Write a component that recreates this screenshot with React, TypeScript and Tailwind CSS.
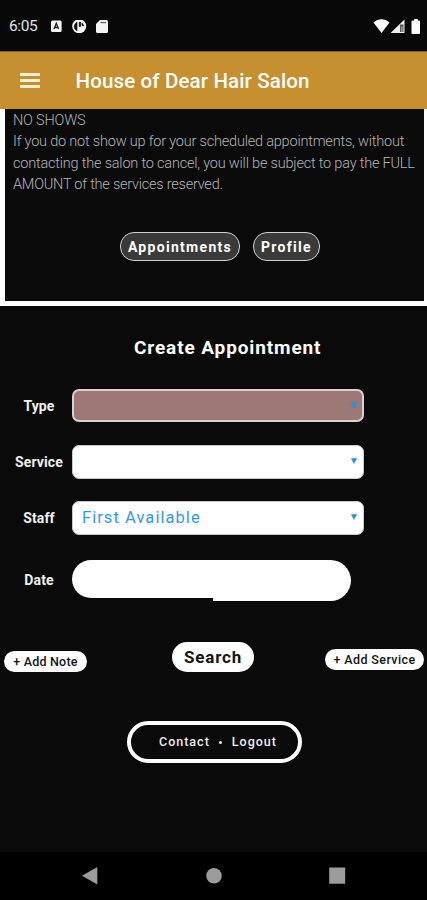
import React from "react";

function StatusBar() {
  return (
    <div className="flex h-[51px] shrink-0 items-start bg-[#080808] pl-[9px] pt-[17px] text-white">
      <span className="w-[42px] text-[15.5px] leading-[19px] tracking-[-0.4px] text-[#e4e4e4]">6:05</span>
      <svg className="mt-[3px] h-[13px] w-[60px]" viewBox="0 0 60 13" fill="none">
        <rect x="0" y="0.5" width="10.6" height="11.5" rx="1.5" fill="#f4f4f4" />
        <path d="M3 9 5.300 3.300 7.600 9M4 7.500h2.600" stroke="#222" strokeWidth="1.400" />
        <circle cx="28.200" cy="6.300" r="7" fill="#f4f4f4" />
        <path d="M26 2.200v8.600a4.700 4.700 0 0 1 0-8.600z" fill="#111" stroke="#111" strokeWidth=".6" />
        <path d="M28.300 2.200h1.200v4.200h-1.200zM31 3.200l1.800 2.400H31z" fill="#111" stroke="#111" strokeWidth=".8" />
        <path d="M49 0h6.500a1.500 1.500 0 0 1 1.500 1.500v10a1.500 1.500 0 0 1-1.500 1.500h-9A1.500 1.500 0 0 1 45 11.500V4z" fill="#f4f4f4" />
        <path d="M49.500 2.600h5.500" stroke="#666" strokeWidth="1.300" />
      </svg>
      <svg className="ml-auto mr-[5px] mt-px h-[17px] w-[49px]" viewBox="0 0 49 17">
        <path d="M.5 4.500C5 0 12 0 16.500 4.500L8.500 15z" fill="#fff" />
        <path d="M31.500 1.500V15H17.500z" fill="#eee" />
        <path d="M27 6.500h3.500V14H27z" fill="#555" />
        <path d="M28.200 8.500h1.300V14h-1.300z" fill="#aaa" />
        <path d="M39.500 2.500h1.700V1h3.600v1.500h1.200q1 0 1 1V15q0 1-1 1h-6.500q-1 0-1-1V3.500q0-1 1-1z" fill="#fff" />
      </svg>
    </div>
  );
}

function Header() {
  return (
    <header className="flex h-[58px] shrink-0 items-center border-t border-[#805d22] bg-[#c68f30] pl-5 text-white">
      <div className="flex w-5 flex-col gap-[3px]">
        <i className="h-[3px] bg-[#fff0d0]" />
        <i className="h-[3px] bg-[#fff0d0]" />
        <i className="h-[3px] bg-[#fff0d0]" />
      </div>
      <h1 className="ml-[35.5px] mt-px whitespace-nowrap text-[20.5px] font-medium tracking-[0.14px]">House of Dear Hair Salon</h1>
    </header>
  );
}

function Select({ type, children }: { type?: boolean; children?: React.ReactNode }) {
  return (
    <div
      className={
        "flex w-[292px] items-center justify-between rounded-[7px] pl-[9px] pr-[6px] text-[#2f9be6] " +
        (type ? "h-[33px] border-2 border-[#dccfcd] bg-[#9e7876]" : "h-[34px] border border-[#c9c9c9] bg-white")
      }
    >
      <span className="whitespace-nowrap pt-px text-[16.5px] tracking-[1.05px]">{children}</span>
      <svg className={type ? "-mr-px h-[6px] w-[6px] -translate-y-px" : "h-[6px] w-[6px] -translate-y-px"} viewBox="0 0 6 6">
        <path d={type ? "M0 .3h6L4.500 6h-3z" : "M0 .3h6L3 6z"} fill="#2492df" />
      </svg>
    </div>
  );
}

function Label({ children }: { children: React.ReactNode }) {
  return (
    <span className="w-[72px] whitespace-nowrap pl-[6px] pt-px text-center text-[14px] font-bold tracking-[0.1px] text-[#f0f0f0]">
      {children}
    </span>
  );
}

export default function App() {
  return (
    <div className="flex h-[900px] w-[427px] flex-col overflow-hidden bg-[#0a0a0a] font-['Roboto','Liberation_Sans',sans-serif]">
      <StatusBar />
      <Header />
      <section className="h-[197px] shrink-0 border-b-[5px] border-l-[5px] border-r-[3px] border-white pl-2">
        <div className="whitespace-nowrap pt-[0.5px] text-[14.5px] font-light leading-[21.5px] text-[#b5b5b5]">
          <p className="tracking-[-0.2px]">NO SHOWS</p>
          <p className="tracking-[-0.2px]">If you do not show up for your scheduled appointments, without</p>
          <p className="tracking-[-0.2px]">contacting the salon to cancel, you will be subject to pay the FULL</p>
          <p className="tracking-[-0.23px]">AMOUNT of the services reserved.</p>
        </div>
        <div className="ml-[107px] mt-[36.5px] flex gap-[13px] font-bold tracking-[1.3px] text-white">
          <button className="flex h-[29px] w-[120px] items-center justify-center whitespace-nowrap rounded-[14px] border-[1.5px] border-[#d0d0d0] bg-[#3a3a3a] pt-px text-[14px]">Appointments</button>
          <button className="flex h-[29px] w-[67px] items-center justify-center rounded-[14px] border-[1.5px] border-[#d0d0d0] bg-[#3a3a3a] pt-px text-[14px]">Profile</button>
        </div>
      </section>
      <main className="flex flex-1 flex-col">
        <h2 className="ml-[134px] mt-[30px] whitespace-nowrap text-[19px] font-bold leading-6 tracking-[0.88px] text-white">Create Appointment</h2>
        <div className="mt-[29px] flex h-[33px] items-center"><Label>Type</Label><Select type /></div>
        <div className="mt-[23px] flex h-[34px] items-center"><Label>Service</Label><Select /></div>
        <div className="mt-[22px] flex h-[34px] items-center"><Label>Staff</Label><Select>First Available</Select></div>
        <div className="mt-[25px] flex h-[41px] items-start">
          <div className="flex h-[39px] items-center"><Label>Date</Label></div>
          <div className="h-[38px] w-[141px] rounded-l-full bg-white" />
          <div className="h-[41px] w-[138px] rounded-r-full bg-white" />
        </div>
        <div className="mt-[41px] flex h-[30px] items-start pl-1 text-[#151515]">
          <button className="mt-[9px] flex h-[21px] w-[83px] items-center justify-center whitespace-nowrap rounded-full bg-white pt-[1.5px] text-[12.5px] font-medium tracking-[0.2px]">+ Add Note</button>
          <button className="ml-[85px] flex h-[30px] w-[82px] items-center justify-center rounded-full bg-white pt-[1.5px] text-[17px] font-bold tracking-[0.8px]">Search</button>
          <button className="ml-[71px] mt-[7px] flex h-[21px] w-[99px] items-center justify-center whitespace-nowrap rounded-full bg-white pt-[1.5px] text-[12.5px] font-medium tracking-[0.4px]">+ Add Service</button>
        </div>
        <div className="ml-[127px] mt-[49px] flex h-[42px] w-[175px] items-center whitespace-nowrap rounded-full border-4 border-white pl-7 text-[12.5px] font-medium tracking-[1px] text-[#ededed]">
          <span>Contact</span>
          <span className="ml-[9px] h-[3px] w-[3px] rounded-full bg-[#e5e5e5]" />
          <span className="ml-[10px]">Logout</span>
        </div>
      </main>
      <nav className="flex h-[48px] shrink-0 items-center bg-black pl-[82px]">
        <svg className="h-[18px] w-[264px]" viewBox="0 0 264 18" fill="#9b9b9b">
          <path d="M0 8.800 15.300 0v17.600z" />
          <circle cx="132" cy="8.700" r="7.800" />
          <rect x="247.200" y=".6" width="16" height="16.200" rx=".6" />
        </svg>
      </nav>
    </div>
  );
}
